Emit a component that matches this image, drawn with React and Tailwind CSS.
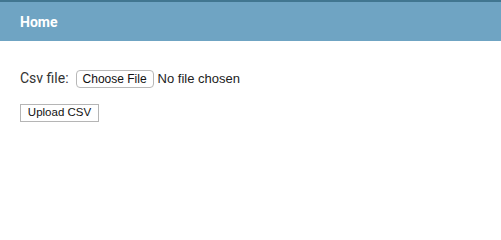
export default function App() {
  return (
    <div className="w-[501px] h-[225px] bg-white">
      <div className="border-t-2 border-[#417690] bg-[#6fa4c3] h-[41px] flex items-center px-5 pt-[1px]">
        <span className="text-white font-bold text-[14px] leading-none font-['Roboto',sans-serif]">Home</span>
      </div>
      <div className="px-5 pt-[28px]">
        <div className="flex items-center h-[19px]">
          <label className="text-[14px] text-[#333] font-['Roboto',sans-serif] mr-[7px]">Csv file:</label>
          <span className="h-[18px] w-[78px] border border-[#b8b8b8] rounded-[4px] bg-white flex items-center justify-center text-[12px] text-[#111] font-['Liberation_Sans',sans-serif] leading-none">Choose File</span>
          <span className="ml-[4px] text-[13px] text-[#222] font-['Liberation_Sans',sans-serif]">No file chosen</span>
        </div>
        <div className="mt-[16px]">
          <button className="h-[18px] w-[79px] border border-[#b5b5b5] bg-white flex items-center justify-center text-[11.5px] text-[#111] font-['Liberation_Sans',sans-serif] leading-none">Upload CSV</button>
        </div>
      </div>
    </div>
  );
}
